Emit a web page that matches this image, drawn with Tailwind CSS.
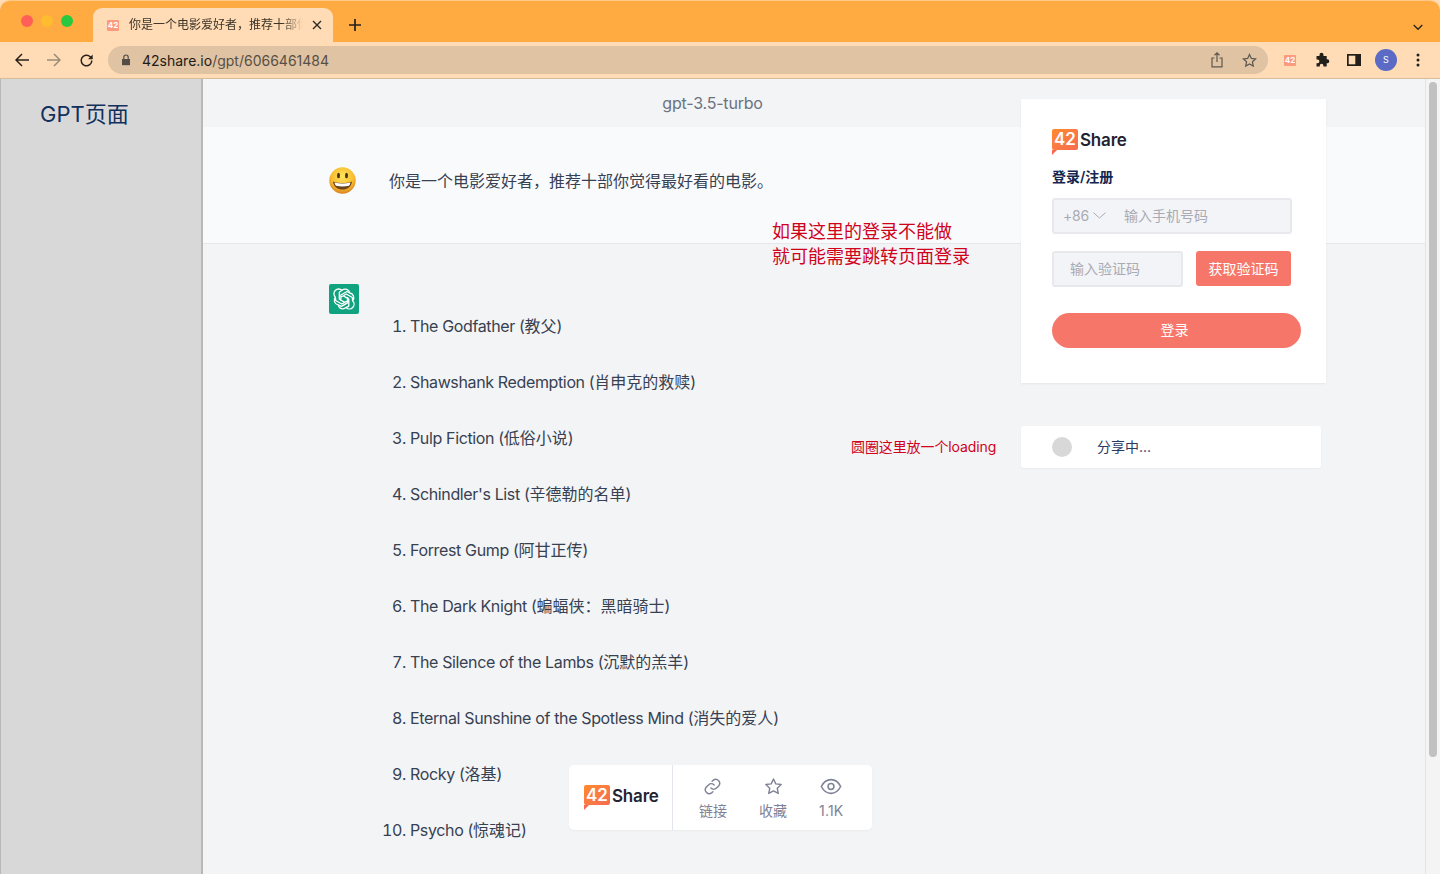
<!DOCTYPE html>
<html lang="zh">
<head>
  <meta charset="UTF-8">
  <meta name="viewport" content="width=device-width, initial-scale=1.0">
  <title>42Share GPT</title>
  <script src="https://cdn.jsdelivr.net/npm/@tailwindcss/browser@4"></script>
</head>
<body class="h-[874px] w-[1440px] overflow-hidden bg-[#f3f4f6] font-['Inter','Noto_Sans_CJK_SC',sans-serif]">

  <!-- Browser chrome -->
  <header class="h-[79px] border-b border-[#d9bc9a] bg-[#ffdcb6]">
    <div class="flex h-[42px] items-end rounded-t-[10px] border-t border-[#ffc98a] bg-[#ffab42]">
      <div class="flex h-full w-[93px] items-center gap-[8px] pb-[2px] pl-[21px]">
        <span class="h-[12px] w-[12px] rounded-full bg-[#ff5f57]"></span>
        <span class="h-[12px] w-[12px] rounded-full bg-[#febc2e]"></span>
        <span class="h-[12px] w-[12px] rounded-full bg-[#28c840]"></span>
      </div>
      <div class="flex h-[34px] w-[240px] items-center rounded-t-[9px] bg-[#ffdcb6] pl-[14px] pr-[11px]">
        <span class="flex h-[11px] w-[12px] shrink-0 items-center justify-center rounded-[1px] bg-[#fb9a7d] text-[8px] font-bold leading-none text-white">42</span>
        <span class="ml-[10px] w-[174px] overflow-hidden whitespace-nowrap text-[12px] leading-[18px] text-[#3d3428] [mask-image:linear-gradient(90deg,#000_88%,transparent)]">你是一个电影爱好者，推荐十部你觉得最好看的电影。</span>
        <svg class="ml-auto" width="10" height="10" viewBox="0 0 10 10" fill="none" stroke="#2f2a24" stroke-width="1.4"><path d="M1 1l8 8M9 1l-8 8"/></svg>
      </div>
      <svg class="mb-[10px] ml-[15px]" width="14" height="14" viewBox="0 0 14 14" fill="none" stroke="#26211b" stroke-width="1.7"><path d="M7 1v12M1 7h12"/></svg>
      <svg class="mb-[11px] ml-auto mr-[17px]" width="10" height="7" viewBox="0 0 10 7" fill="none" stroke="#2b2620" stroke-width="1.4"><path d="M.7 1l4.3 4.2L9.3 1"/></svg>
    </div>
    <div class="flex h-[36px] items-center">
      <div class="flex w-[108px] items-center pl-[15px]">
        <svg width="14" height="14" viewBox="0 0 14 14" fill="none" stroke="#26211b" stroke-width="1.5"><path d="M14 7H1.4M7 1L1 7l6 6"/></svg>
        <svg class="ml-[18px]" width="14" height="14" viewBox="0 0 14 14" fill="none" stroke="#9b8c7a" stroke-width="1.5"><path d="M0 7h12.6M7 1l6 6-6 6"/></svg>
        <svg class="ml-[18px]" width="15" height="15" viewBox="0 0 24 24" fill="none" stroke="#26211b" stroke-width="2.4"><path d="M20.5 12a8.5 8.5 0 1 1-2.6-6.1L21 9"/><path d="M21.8 2.5V9.8h-7.3" fill="#26211b" stroke="none"/></svg>
      </div>
      <div class="flex h-[28px] w-[1160px] items-center rounded-full bg-[#dfc3a3] pl-[13px] pr-[11px]">
        <svg width="10" height="12" viewBox="0 0 10 12" fill="#544d45"><path d="M1 5h8v6.2H1z"/><path d="M2.8 5V3.2a2.2 2.2 0 0 1 4.4 0V5" fill="none" stroke="#544d45" stroke-width="1.2"/></svg>
        <span class="ml-[11px] text-[14px] text-[#1f1b16]">42share.io<span class="text-[#574f45]">/gpt/6066461484</span></span>
        <svg class="ml-auto" width="12" height="16" viewBox="0 0 12 16" fill="none" stroke="#5f5850" stroke-width="1.2"><path d="M3.5 6H1v8.8h10V6H8.5M6 10V1M3.5 3.2L6 .9l2.500 2.300"/></svg>
        <svg class="ml-[19px]" width="15" height="15" viewBox="0 0 24 24" fill="none" stroke="#5f5850" stroke-width="2"><path d="M12 2.500l2.900 6.200 6.800.8-5 4.600 1.300 6.700L12 17.500l-6 3.300 1.300-6.700-5-4.600 6.800-.8z"/></svg>
      </div>
      <span class="ml-[16px] flex h-[11px] w-[12px] items-center justify-center rounded-[1px] bg-[#fb9a7d] text-[8px] font-bold leading-none text-white">42</span>
      <svg class="ml-[18px]" width="16" height="16" viewBox="0 0 16 16" fill="#23201c"><path d="M5.500 2.800a2 2 0 0 1 4 0V4h3.200v3.200h.6a2 2 0 0 1 0 4h-.6v3.300H9.400v-1a1.800 1.800 0 0 0-3.600 0v1H2.500v-3.300h1a1.900 1.900 0 0 0 0-3.800h-1V4h3z"/></svg>
      <svg class="ml-[17px]" width="14" height="12" viewBox="0 0 14 12"><path d="M0 0h14v12H0z" fill="#23201c"/><path d="M1.700 1.700h6.600v8.600H1.700z" fill="#ffdcb6"/></svg>
      <span class="ml-[14px] flex h-[22px] w-[22px] items-center justify-center rounded-full bg-[#5b6ac4] text-[9px] text-white">S</span>
      <svg class="ml-[19px]" width="4" height="14" viewBox="0 0 4 14" fill="#23201c"><circle cx="2" cy="2" r="1.5"/><circle cx="2" cy="7" r="1.5"/><circle cx="2" cy="12" r="1.5"/></svg>
    </div>
  </header>

  <div class="flex h-[795px]">
    <!-- Sidebar -->
    <aside class="w-[203px] shrink-0 border-l border-r-2 border-[#b8b8b8] bg-[#d8d8d8] pl-[39px] pt-[21px]">
      <h1 class="text-[22px] leading-[28px] text-[#12305e]">GPT页面</h1>
    </aside>

    <!-- Page -->
    <main class="relative min-w-0 flex-1 overflow-hidden border-r border-[#e4e4e4]">
      <div class="h-[48px] w-[1019px] pt-[14px] text-center text-[16px] leading-[21px] tracking-[-0.2px] text-[#6b7280]">gpt-3.5-turbo</div>

      <section class="flex h-[117px] border-b border-[#e5e7eb] bg-[#f9fafc] pl-[126px] pt-[40px]">
        <svg width="27" height="27" viewBox="0 0 27 27">
          <defs><radialGradient id="face" cx="50%" cy="35%" r="65%"><stop offset="0%" stop-color="#ffe45c"/><stop offset="65%" stop-color="#f9bd2e"/><stop offset="100%" stop-color="#d98322"/></radialGradient></defs>
          <circle cx="13.5" cy="13.5" r="13.2" fill="url(#face)"/>
          <ellipse cx="9.5" cy="8.5" rx="1.5" ry="2.8" fill="#4a3418"/>
          <ellipse cx="17.5" cy="8.5" rx="1.5" ry="2.8" fill="#4a3418"/>
          <path d="M4 14.500c5.500 2 13.500 2 19 0-.6 5.500-4.800 8-9.500 8S4.600 20 4 14.500z" fill="#6b4319"/>
          <path d="M5.500 15.500c4.800 1.400 11.200 1.400 16 0-.3 1.600-.8 2.400-1.500 3.200-4 1-9 1-13 0-.7-.8-1.200-1.600-1.500-3.200z" fill="#fff"/>
        </svg>
        <p class="ml-[33px] mt-[3px] text-[16px] leading-[22px] text-[#374151]">你是一个电影爱好者，推荐十部你觉得最好看的电影。</p>
      </section>

      <section class="flex pl-[126px] pt-[40px]">
        <span class="flex h-[30px] w-[30px] shrink-0 items-center justify-center rounded-[2px] bg-[#10a37f]">
          <svg width="24" height="24" viewBox="0 0 24 24" fill="none" stroke="#fff" stroke-width="1.3" stroke-linejoin="round"><path d="M10 3.300a4.700 4.700 0 0 1 7.800 2.700 4.700 4.700 0 0 1 2.800 7.700 4.700 4.700 0 0 1-6.600 6.900 4.700 4.700 0 0 1-7.800-2.700 4.700 4.700 0 0 1-2.800-7.700A4.700 4.700 0 0 1 10 3.300z"/><path d="M10 3.300L7.300 5.200v7l5.100 2.900M17.800 6L15 4.500 8.800 8l.1 5.900M20.600 13.700l-.3-3.200-6.100-3.500-5 3M14 20.600l2.800-1.500v-7l-5-3M6.200 17.900l3.200 1.500 6.100-3.500v-5.800M3.400 10.300l.3 3.200 6.100 3.500 5.100-2.900"/></svg>
        </span>
        <ol class="ml-[51px] mt-[30px] list-decimal text-[16px] leading-[24px] tracking-[-0.36px] text-[#374151] [&>li]:mb-[32px] [&>li>span]:tracking-normal">
          <li>The Godfather (<span>教父</span>)</li>
          <li>Shawshank Redemption (<span>肖申克的救赎</span>)</li>
          <li>Pulp Fiction (<span>低俗小说</span>)</li>
          <li>Schindler's List (<span>辛德勒的名单</span>)</li>
          <li>Forrest Gump (<span>阿甘正传</span>)</li>
          <li>The Dark Knight (<span>蝙蝠侠：黑暗骑士</span>)</li>
          <li>The Silence of the Lambs (<span>沉默的羔羊</span>)</li>
          <li>Eternal Sunshine of the Spotless Mind (<span>消失的爱人</span>)</li>
          <li>Rocky (<span>洛基</span>)</li>
          <li>Psycho (<span>惊魂记</span>)</li>
        </ol>
      </section>

      <!-- Annotations -->
      <p class="absolute left-[569px] top-[140px] text-[18px] leading-[25px] text-[#d0021b]">如果这里的登录不能做<br>就可能需要跳转页面登录</p>
      <p class="absolute left-[648px] top-[358px] text-[14px] leading-[20px] tracking-[-0.1px] text-[#d0021b]">圆圈这里放一个loading</p>

      <!-- Login card -->
      <div class="absolute left-[818px] top-[20px] h-[284px] w-[305px] bg-white pl-[31px] pt-[30px] shadow-[0_1px_2px_rgba(0,0,0,0.06)]">
        <div class="flex h-[26px] items-start">
          <span class="relative flex h-[21px] w-[26px] items-center justify-center rounded-[2px] bg-linear-to-br from-[#ff8a2b] to-[#f76a50] text-[17px] font-semibold leading-none text-white">42<span class="absolute -bottom-[5px] left-0 h-0 w-0 border-r-[5px] border-t-[5px] border-r-transparent border-t-[#f76a50]"></span></span>
          <span class="ml-[2px] mt-[1px] text-[17px] font-semibold leading-[21px] tracking-[-0.2px] text-[#1f2433]">Share</span>
        </div>
        <h2 class="mt-[12px] text-[14px] font-semibold leading-[20px] text-[#12264f]">登录/注册</h2>
        <div class="mt-[11px] flex h-[36px] w-[240px] items-center rounded-[3px] border-2 border-[#e8e9ed] bg-[#f3f4f8] pb-[2px] pl-[9px] text-[14px] tracking-[-0.2px] text-[#a8abb3]">
          <span>+86</span>
          <svg class="ml-[4px]" width="13" height="7" viewBox="0 0 13 7" fill="none" stroke="#a8abb3"><path d="M.5.700L6.500 6l6-5.300"/></svg>
          <span class="ml-[18px] tracking-normal">输入手机号码</span>
        </div>
        <div class="mt-[17px] flex w-[239px] justify-between">
          <div class="flex h-[36px] w-[131px] items-center rounded-[3px] border-2 border-[#e8e9ed] bg-[#f3f4f8] pb-[2px] pl-[16px] text-[14px] text-[#a8abb3]">输入验证码</div>
          <button class="h-[35px] w-[95px] rounded-[3px] bg-[#f6776a] text-[14px] text-white">获取验证码</button>
        </div>
        <button class="mt-[26px] block h-[35px] w-[249px] rounded-full bg-[#f6776a] pb-[2px] pr-[4px] text-[14px] text-white">登录</button>
      </div>

      <!-- Share status -->
      <div class="absolute left-[818px] top-[347px] flex h-[42px] w-[300px] items-center rounded-[3px] bg-white pl-[31px] shadow-[0_1px_2px_rgba(0,0,0,0.04)]">
        <span class="h-[20px] w-[20px] rounded-full bg-[#d8d8d8]"></span>
        <span class="ml-[25px] mb-[2px] text-[14px] text-[#2b3a5e]">分享中...</span>
      </div>

      <!-- Floating bar -->
      <div class="absolute left-[366px] top-[686px] flex h-[65px] w-[303px] rounded-[5px] bg-white shadow-[0_1px_2px_rgba(0,0,0,0.04)]">
        <div class="flex w-[104px] shrink-0 items-start border-r border-[#e2e4ee] pl-[15px] pt-[20px]">
          <span class="relative flex h-[20px] w-[26px] items-center justify-center rounded-[2px] bg-linear-to-br from-[#ff8a2b] to-[#f76a50] text-[17px] font-semibold leading-none text-white">42<span class="absolute -bottom-[5px] left-0 h-0 w-0 border-r-[5px] border-t-[5px] border-r-transparent border-t-[#f76a50]"></span></span>
          <span class="ml-[2px] mt-[1px] text-[17px] font-semibold leading-[21px] tracking-[-0.2px] text-[#1f2433]">Share</span>
        </div>
        <div class="flex flex-col items-center pl-[26px] pt-[12px] text-[14px] leading-[20px] text-[#7f8296]">
          <svg class="-translate-x-[1px]" width="19" height="19" viewBox="0 0 24 24" fill="none" stroke="#7f8296" stroke-width="1.8" stroke-linecap="round"><path d="M10 14a5 5 0 0 0 7 0l3-3a5 5 0 0 0-7-7l-1.500 1.500"/><path d="M14 10a5 5 0 0 0-7 0l-3 3a5 5 0 0 0 7 7l1.500-1.500"/></svg>
          <span class="mt-[5px]">链接</span>
        </div>
        <div class="flex flex-col items-center pl-[32px] pt-[12px] text-[14px] leading-[20px] text-[#7f8296]">
          <svg width="19" height="19" viewBox="0 0 24 24" fill="none" stroke="#7f8296" stroke-width="1.8" stroke-linejoin="round"><path d="M12 2.500l2.900 6.200 6.800.8-5 4.600 1.300 6.700L12 17.500l-6 3.300 1.300-6.700-5-4.600 6.800-.8z"/></svg>
          <span class="mt-[5px]">收藏</span>
        </div>
        <div class="flex flex-col items-center pl-[32px] pt-[12px] text-[14px] leading-[20px] tracking-[0.2px] text-[#7f8296]">
          <svg width="22" height="19" viewBox="0 0 24 20" fill="none" stroke="#7f8296" stroke-width="1.7"><path d="M1.500 10C4 5 7.800 2.500 12 2.500S20 5 22.500 10C20 15 16.200 17.500 12 17.500S4 15 1.500 10z"/><circle cx="12" cy="10" r="3.200"/></svg>
          <span class="mt-[5px]">1.1K</span>
        </div>
      </div>
    </main>

    <!-- Scrollbar -->
    <div class="w-[14px] shrink-0 bg-[#f4f4f4] pl-[3px] pt-[3px]">
      <div class="h-[675px] w-[8px] rounded-full bg-[#c1c1c1]"></div>
    </div>
  </div>
</body>
</html>
